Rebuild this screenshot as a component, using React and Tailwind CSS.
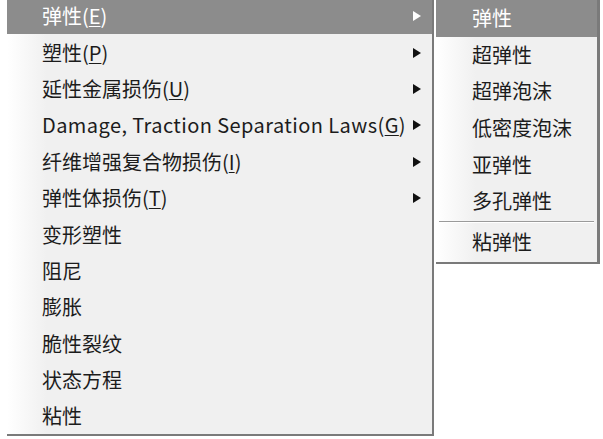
import React from 'react';

const mainItems = [
    { label: '弹性', key: 'E', sub: true, active: true },
    { label: '塑性', key: 'P', sub: true },
    { label: '延性金属损伤', key: 'U', sub: true },
    { label: 'Damage, Traction Separation Laws', key: 'G', sub: true, latin: true },
    { label: '纤维增强复合物损伤', key: 'I', sub: true },
    { label: '弹性体损伤', key: 'T', sub: true },
    { label: '变形塑性' },
    { label: '阻尼' },
    { label: '膨胀' },
    { label: '脆性裂纹' },
    { label: '状态方程' },
    { label: '粘性' },
];

const subItems = ['弹性', '超弹性', '超弹泡沫', '低密度泡沫', '亚弹性', '多孔弹性'];

const Arrow = ({ white }) => (
    <svg width="8" height="10" viewBox="0 0 8 10" className="shrink-0">
        <path d="M0 0 L8 5 L0 10 Z" fill={white ? '#ffffff' : '#111111'} />
    </svg>
);

const App = () => {
    return (
        <div
            className="w-[603px] h-[439px] bg-white overflow-hidden flex items-start text-[20px] text-[#1c1c1c]"
            style={{ fontFamily: '"Noto Sans CJK SC", "Microsoft YaHei", sans-serif' }}
        >
            {/* Main menu */}
            <div className="ml-[7px] w-[427px] h-[438px] -mt-[2px] bg-[linear-gradient(to_right,#ffffff,#f0f0f0_40px)] border-r-2 border-b-2 border-[#7a7a7a] flex flex-col">
                {mainItems.map((item, i) => (
                    <div
                        key={i}
                        className={`h-[36.4px] shrink-0 flex items-center pl-[35px] pr-[11px] ${item.active ? 'bg-[#8c8c8c] text-white' : ''}`}
                    >
                        <span className={`flex-1 whitespace-nowrap leading-none ${item.latin ? 'tracking-[0.42px]' : ''}`}>
                            {item.label}
                            {item.key && (
                                <>
                                    (<span className="underline underline-offset-2 decoration-1">{item.key}</span>)
                                </>
                            )}
                        </span>
                        {item.sub && <Arrow white={item.active} />}
                    </div>
                ))}
            </div>

            {/* Submenu */}
            <div className="ml-[2px] w-[164px] h-[264px] bg-[linear-gradient(to_right,#ffffff,#f0f0f0_40px)] border-r-[3px] border-b-2 border-[#7a7a7a] flex flex-col">
                {subItems.map((label, i) => (
                    <div
                        key={i}
                        className={`h-[36.6px] shrink-0 flex items-center pl-[36px] leading-none ${i === 0 ? 'bg-[#8c8c8c] text-white' : ''}`}
                    >
                        {label}
                    </div>
                ))}
                <div className="h-[4px] shrink-0 flex flex-col justify-center px-[3px]">
                    <div className="h-px bg-[#9a9a9a]" />
                    <div className="h-px bg-white" />
                </div>
                <div className="h-[36.6px] shrink-0 flex items-center pl-[36px] leading-none">粘弹性</div>
            </div>
        </div>
    );
};

export default App;
